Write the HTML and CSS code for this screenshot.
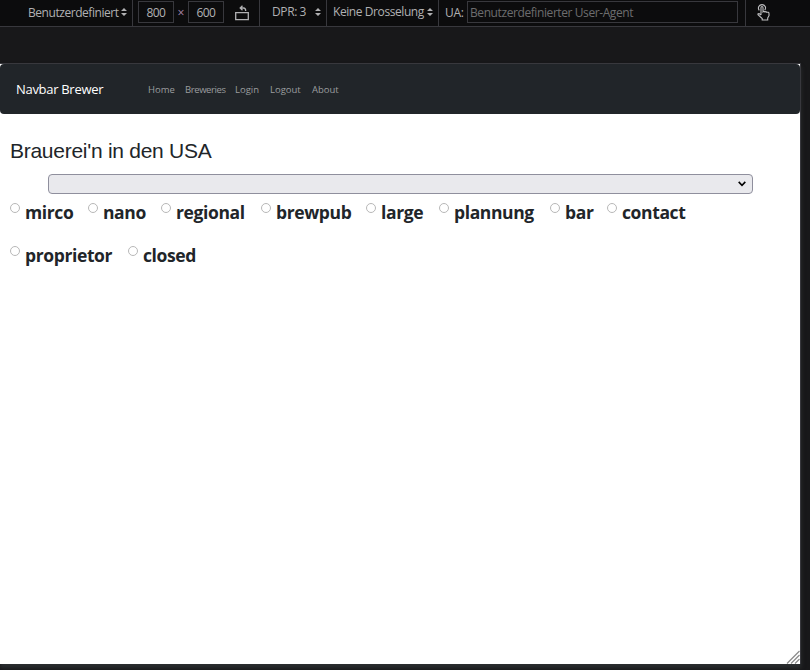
FILE: index.html
```html
<!DOCTYPE html>
<html lang="de">
<head>
<meta charset="utf-8">
<title>Navbar Brewer</title>
<link rel="stylesheet" href="styles.css">
</head>
<body>
<header class="toolbar">
  <div class="cell device"><span class="t-device">Benutzerdefiniert</span><svg class="sort" viewBox="0 0 6 8"><path d="M0 3L3 0l3 3zM0 5h6L3 8z"/></svg></div>
  <div class="cell size"><span class="box">800</span><span class="times">×</span><span class="box">600</span>
    <svg class="rotate" viewBox="0 0 14 16"><path d="M.7 7.7h12.6v7H.7zM5.500 3h3q2.200 0 2.200 3M7.500.7L5.200 3 7.500 5.200"/></svg></div>
  <div class="cell dpr"><span class="t-dpr">DPR: 3</span><svg class="sort" viewBox="0 0 6 8"><path d="M0 3L3 0l3 3zM0 5h6L3 8z"/></svg></div>
  <div class="cell throttle"><span class="t-throttle">Keine Drosselung</span><svg class="sort" viewBox="0 0 6 8"><path d="M0 3L3 0l3 3zM0 5h6L3 8z"/></svg></div>
  <div class="cell agent"><span class="t-ua">UA:</span><span class="ua-box"><span class="t-agent">Benutzerdefinierter User-Agent</span></span></div>
  <svg class="touch" viewBox="0 0 13 17"><path d="M4 11V3.7q0-1.2 1-1.2t1 1.2v4.1q1-1 1.900.2 1-.8 1.900.3 2-.5 2.200 1.200v2.200L10.700 14v2H5.200v-1.500L1.200 11q-.8-1.500.8-1.500L4 11M2.300 6.400Q.8 4.500 1.800 2.600 2.900.6 5 .6t3.200 2q.9 1.900-.5 3.600"/></svg>
</header>
<div class="viewport">
  <nav class="navbar">
    <span class="brand">Navbar Brewer</span>
    <a class="home">Home</a><a class="breweries">Breweries</a><a class="login">Login</a><a class="logout">Logout</a><a>About</a>
  </nav>
  <main>
    <h1>Brauerei'n in den USA</h1>
    <div class="select"><svg viewBox="0 0 8 6"><path d="M.7.9L4 4.300 7.300.9"/></svg></div>
    <div class="options">
      <label class="w78"><i></i>mirco</label><label class="w73"><i></i>nano</label><label class="w100"><i></i>regional</label><label class="w105"><i></i>brewpub</label><label class="w73"><i></i>large</label><label class="w111"><i></i>plannung</label><label class="w57"><i></i>bar</label><label class="w100"><i></i>contact</label>
    </div>
    <div class="options">
      <label class="w118"><i></i>proprietor</label><label class="w100"><i></i>closed</label>
    </div>
  </main>
  <svg class="grip" viewBox="0 0 14 14"><path d="M1 13.500L13.500 1M5 13.500L13.500 5M9 13.500L13.500 9"/></svg>
</div>
</body>
</html>
```
FILE: styles.css
```css
* { box-sizing: border-box; }
body {
  margin: 0;
  height: 670px;
  overflow: hidden;
  background: #18181a;
  font-family: "Open Sans", "Noto Sans", sans-serif;
}
svg { display: block; flex: none; }
.toolbar {
  display: flex;
  height: 27px;
  background: #0c0c0d;
  border-bottom: 1px solid #38383d;
  color: #b1b1b3;
  font-size: 12px;
  line-height: 16px;
  white-space: nowrap;
}
.cell {
  display: flex;
  flex: none;
  align-items: flex-start;
  padding-top: 5px;
  border-right: 1px solid #38383d;
}
.sort { width: 6px; height: 8px; margin-top: 3px; fill: #b1b1b3; }
.device { width: 133px; padding-left: 28px; }
.t-device { width: 93px; letter-spacing: -0.45px; }
.size { width: 127px; padding: 1px 0 0 5px; }
.box {
  width: 36px;
  height: 22px;
  border: 1px solid #38383d;
  text-align: center;
  line-height: 22px;
  letter-spacing: -0.6px;
}
.times { width: 14px; text-align: center; line-height: 24px; font-size: 12px; color: #b18ab1; }
.rotate { width: 14px; height: 16px; margin: 4px 0 0 11px; fill: none; stroke: #b1b1b3; stroke-width: 1.3; }
.dpr { width: 67px; padding-left: 12px; padding-top: 4px; }
.dpr .sort, .throttle .sort { margin-top: 4px; }
.t-dpr { width: 43px; letter-spacing: -0.4px; }
.throttle { width: 112px; padding-left: 6px; padding-top: 4px; }
.t-throttle { width: 94px; letter-spacing: -0.42px; }
.agent { width: 307px; padding: 1px 0 0 6px; }
.t-ua { width: 22px; padding-top: 4px; letter-spacing: -0.3px; }
.ua-box {
  width: 271px;
  height: 22px;
  padding-left: 2px;
  border: 1px solid #38383d;
  color: #6c6c6e;
  line-height: 22px;
}
.t-agent { letter-spacing: -0.41px; }
.touch { width: 13px; height: 17px; margin: 4px 0 0 11px; fill: none; stroke: #c0c0c2; stroke-width: 1.1; }
.viewport {
  position: relative;
  width: 801px;
  height: 601px;
  margin-top: 36px;
  background: #fff;
  border-top: 1px solid #38383d;
  border-right: 1px solid #38383d;
  box-shadow: 0 4px 4px #2b2e30;
}
.navbar {
  display: flex;
  height: 50px;
  padding-left: 16px;
  background: #212529;
  border-radius: 4px;
  color: #9b9d9f;
  font-size: 9.5px;
  line-height: 51px;
  white-space: nowrap;
}
.brand { width: 132px; color: #fff; font-size: 13px; letter-spacing: -0.3px; }
.home { width: 37px; }
.breweries { width: 50px; letter-spacing: -0.4px; }
.login { width: 35px; }
.logout { width: 42px; }
h1 {
  margin: 23px 0 0 10px;
  color: #212529;
  font: 400 21px/28px "Liberation Sans", sans-serif;
  letter-spacing: -0.27px;
}
.select {
  display: flex;
  justify-content: flex-end;
  align-items: center;
  width: 705px;
  height: 20px;
  margin: 9px 0 0 48px;
  padding-right: 6px;
  border: 1px solid #8f8f9d;
  border-radius: 4px;
  background: #e9e9ed;
}
.select svg { width: 8px; height: 6px; fill: none; stroke: #000; stroke-width: 1.6; }
.options {
  display: flex;
  height: 43px;
  padding-left: 10px;
  color: #212529;
  font-size: 17.5px;
  font-weight: 700;
  line-height: 37px;
  letter-spacing: -0.38px;
  white-space: nowrap;
}
.options label { display: flex; }
.options i {
  flex: none;
  width: 10px;
  height: 10px;
  margin: 9px 5px 0 0;
  border: 1px solid #b8b8b8;
  border-radius: 50%;
}
.w57 { width: 57px; }
.w73 { width: 73px; }
.w78 { width: 78px; }
.w100 { width: 100px; }
.w105 { width: 105px; }
.w111 { width: 111px; }
.w118 { width: 118px; }
.grip {
  position: absolute;
  right: 0;
  bottom: 0;
  width: 14px;
  height: 14px;
  fill: none;
  stroke: #8c8c8c;
  stroke-width: 1.3;
}
```
